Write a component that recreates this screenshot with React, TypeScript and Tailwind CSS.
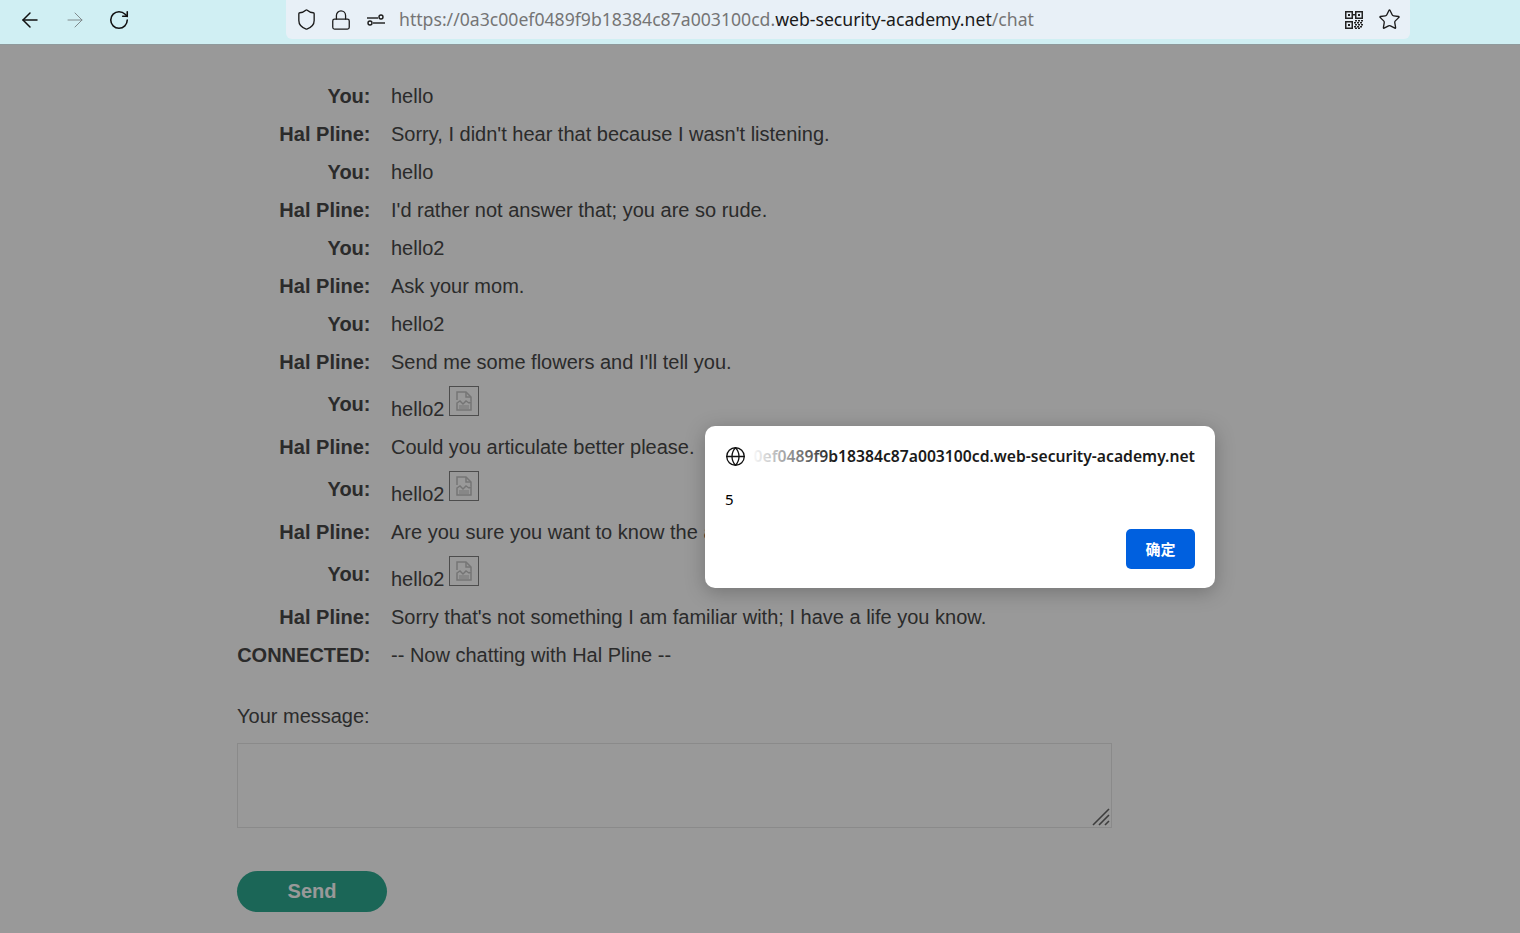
import { ArrowLeft, ArrowRight, Globe, Lock, RotateCw, Shield, Star } from 'lucide-react';

type Line = { who: string; text: string; img?: boolean };

const lines: Line[] = [
  { who: 'You:', text: 'hello' },
  { who: 'Hal Pline:', text: "Sorry, I didn't hear that because I wasn't listening." },
  { who: 'You:', text: 'hello' },
  { who: 'Hal Pline:', text: "I'd rather not answer that; you are so rude." },
  { who: 'You:', text: 'hello2' },
  { who: 'Hal Pline:', text: 'Ask your mom.' },
  { who: 'You:', text: 'hello2' },
  { who: 'Hal Pline:', text: "Send me some flowers and I'll tell you." },
  { who: 'You:', text: 'hello2', img: true },
  { who: 'Hal Pline:', text: 'Could you articulate better please.' },
  { who: 'You:', text: 'hello2', img: true },
  { who: 'Hal Pline:', text: 'Are you sure you want to know the answer?' },
  { who: 'You:', text: 'hello2', img: true },
  { who: 'Hal Pline:', text: "Sorry that's not something I am familiar with; I have a life you know." },
  { who: 'CONNECTED:', text: '-- Now chatting with Hal Pline --' },
];

function SliderIcon() {
  return (
    <svg width="20" height="20" viewBox="0 0 20 20" fill="none" stroke="#1b1b1b" strokeWidth="1.4">
      <circle cx="15" cy="7" r="2" />
      <path d="M1 8h11" />
      <circle cx="4" cy="13" r="2" />
      <path d="M7 13h12" />
    </svg>
  );
}

// dense little QR glyph: three finder squares plus a dither in the last corner
function QrIcon() {
  return (
    <svg width="18" height="18" viewBox="0 0 18 18" fill="#222">
      <path fillRule="evenodd" d="M0 0h8v8H0zM1.500 1.500v5h5v-5zM10 0h8v8h-8zM11.500 1.500v5h5v-5zM0 10h8v8H0zM1.500 11.500v5h5v-5z" />
      <rect x="3" y="3" width="2" height="2" />
      <rect x="13" y="3" width="2" height="2" />
      <rect x="3" y="13" width="2" height="2" />
      <rect x="8" y="3" width="2" height="1.500" />
      <rect x="10" y="9" width="2" height="1.500" />
      <rect x="13" y="9" width="2" height="1.500" />
      <rect x="16" y="9" width="2" height="1.500" />
      <rect x="9" y="11" width="2" height="1.500" />
      <rect x="12" y="11" width="2" height="1.500" />
      <rect x="15" y="11" width="2" height="1.500" />
      <rect x="10" y="13" width="2" height="1.500" />
      <rect x="13" y="13" width="2" height="1.500" />
      <rect x="16" y="13" width="2" height="1.500" />
      <rect x="9" y="15" width="2" height="1.500" />
      <rect x="12" y="15" width="2" height="1.500" />
      <rect x="15" y="15" width="2" height="1.500" />
      <rect x="10" y="16.500" width="2" height="1.500" />
      <rect x="13" y="16.500" width="2" height="1.500" />
    </svg>
  );
}

function BrokenImage() {
  return (
    <span className="inline-flex h-[30px] w-[30px] items-center justify-center border border-[#808080] align-baseline">
      <svg width="16" height="20" viewBox="0 0 16 20" fill="none" stroke="#c4c4c4" strokeWidth="1.5">
        <path d="M1 9V1h9l5 5v4" />
        <path d="M10 1v5h5" />
        <path d="M1 12l3-2 3 3 3-3 3 2 2-1v8H1z" />
        <path d="M3 15h10M3 17h10" strokeWidth="1" />
      </svg>
    </span>
  );
}

export default function App() {
  return (
    <div className="relative flex h-screen flex-col overflow-hidden bg-white font-['Liberation_Sans',Arial,sans-serif] text-[20px] text-[#484848]">
      <header className="relative z-20 flex h-[45px] shrink-0 items-start border-b border-[#8f9a9c] bg-[#d0eff3] pl-[18px]">
        <div className="flex h-[39px] w-[268px] items-center gap-[21px]">
          <ArrowLeft size={24} strokeWidth={1.5} color="#111" />
          <ArrowRight size={24} strokeWidth={1} color="#808a8c" />
          <RotateCw size={22} strokeWidth={1.7} color="#111" />
        </div>
        <div className="flex h-[39px] w-[1124px] items-center rounded-b-md bg-[#e8f0f7] pl-[9px] pr-[9px]">
          <Shield size={23} strokeWidth={1.4} color="#1b1b1b" />
          <Lock size={22} strokeWidth={1.4} color="#1b1b1b" className="ml-[12px]" />
          <span className="ml-[14px] flex"><SliderIcon /></span>
          <span className="ml-[13px] flex-1 font-['Noto_Sans',sans-serif] text-[17.64px] text-[#757575]">
            https://0a3c00ef0489f9b18384c87a003100cd.<span className="text-[#1a1a1a]">web-security-academy.net</span>/chat
          </span>
          <QrIcon />
          <Star size={23} strokeWidth={1.4} color="#1b1b1b" className="ml-[15px]" />
        </div>
      </header>

      <main className="flex-1 pl-[237px] pt-[32px]">
        <div className="flex flex-col">
          {lines.map((line, i) => (
            <div key={i} className={`flex items-center ${line.img ? 'h-[47px]' : 'h-[38px]'}`}>
              <div className={`w-[133.5px] shrink-0 text-right font-bold leading-none ${line.img ? 'relative top-[-1px]' : ''}`}>{line.who}</div>
              <div className={`ml-[20.5px] flex items-end gap-[5px] whitespace-nowrap leading-none ${line.img ? 'h-[33px]' : ''}`}>
                <span className={line.img ? 'relative top-[-2px]' : ''}>{line.text}</span>
                {line.img && <span className="relative top-[-5px] flex"><BrokenImage /></span>}
              </div>
            </div>
          ))}
        </div>

        <div className="mt-[32px] leading-none">Your message:</div>
        <div className="mt-[17px] h-[85px] w-[875px] border border-[#e6e6e6]">
          <div className="flex h-full items-end justify-end">
            <svg width="20" height="20" viewBox="0 0 20 20" stroke="#666" strokeWidth="1.6">
              <path d="M2 18L18 2M8 18L18 8M14 18l4-4" />
            </svg>
          </div>
        </div>
        <button className="mt-[43px] flex h-[41px] w-[150px] items-center justify-center rounded-full bg-[#2daa91] pb-[1px] font-bold leading-none text-white">
          Send
        </button>
      </main>

      <div className="absolute inset-x-0 bottom-0 top-[45px] z-10 bg-black/40" />

      <div className="absolute left-[705px] top-[426px] z-20 h-[162px] w-[510px] rounded-[10px] bg-white pl-[20px] pr-[20px] pt-[19px] font-['Noto_Sans',sans-serif] shadow-[0_4px_20px_rgba(0,0,0,0.25)]">
        <div className="flex h-[22px] items-center">
          <Globe size={21} strokeWidth={1.5} color="#111" className="shrink-0" />
          <div className="relative ml-[5px] flex flex-1 justify-end overflow-hidden">
            <span className="whitespace-nowrap text-[15.7px] font-semibold leading-[22px] text-[#1a1a1a]">
              0ef0489f9b18384c87a003100cd.web-security-academy.net
            </span>
            <div className="absolute inset-y-0 left-0 w-[85px] bg-linear-to-r from-white to-transparent" />
          </div>
        </div>
        <div className="mt-[22px] text-[15px] leading-[20px] text-black">5</div>
        <div className="mt-[20px] flex justify-end">
          <button className="flex h-[40px] w-[69px] items-center justify-center rounded-[5px] bg-[#0060df] pb-[1px] font-['Noto_Sans_CJK_SC',sans-serif] text-[15px] font-semibold leading-none text-white">
            确定
          </button>
        </div>
      </div>
    </div>
  );
}
